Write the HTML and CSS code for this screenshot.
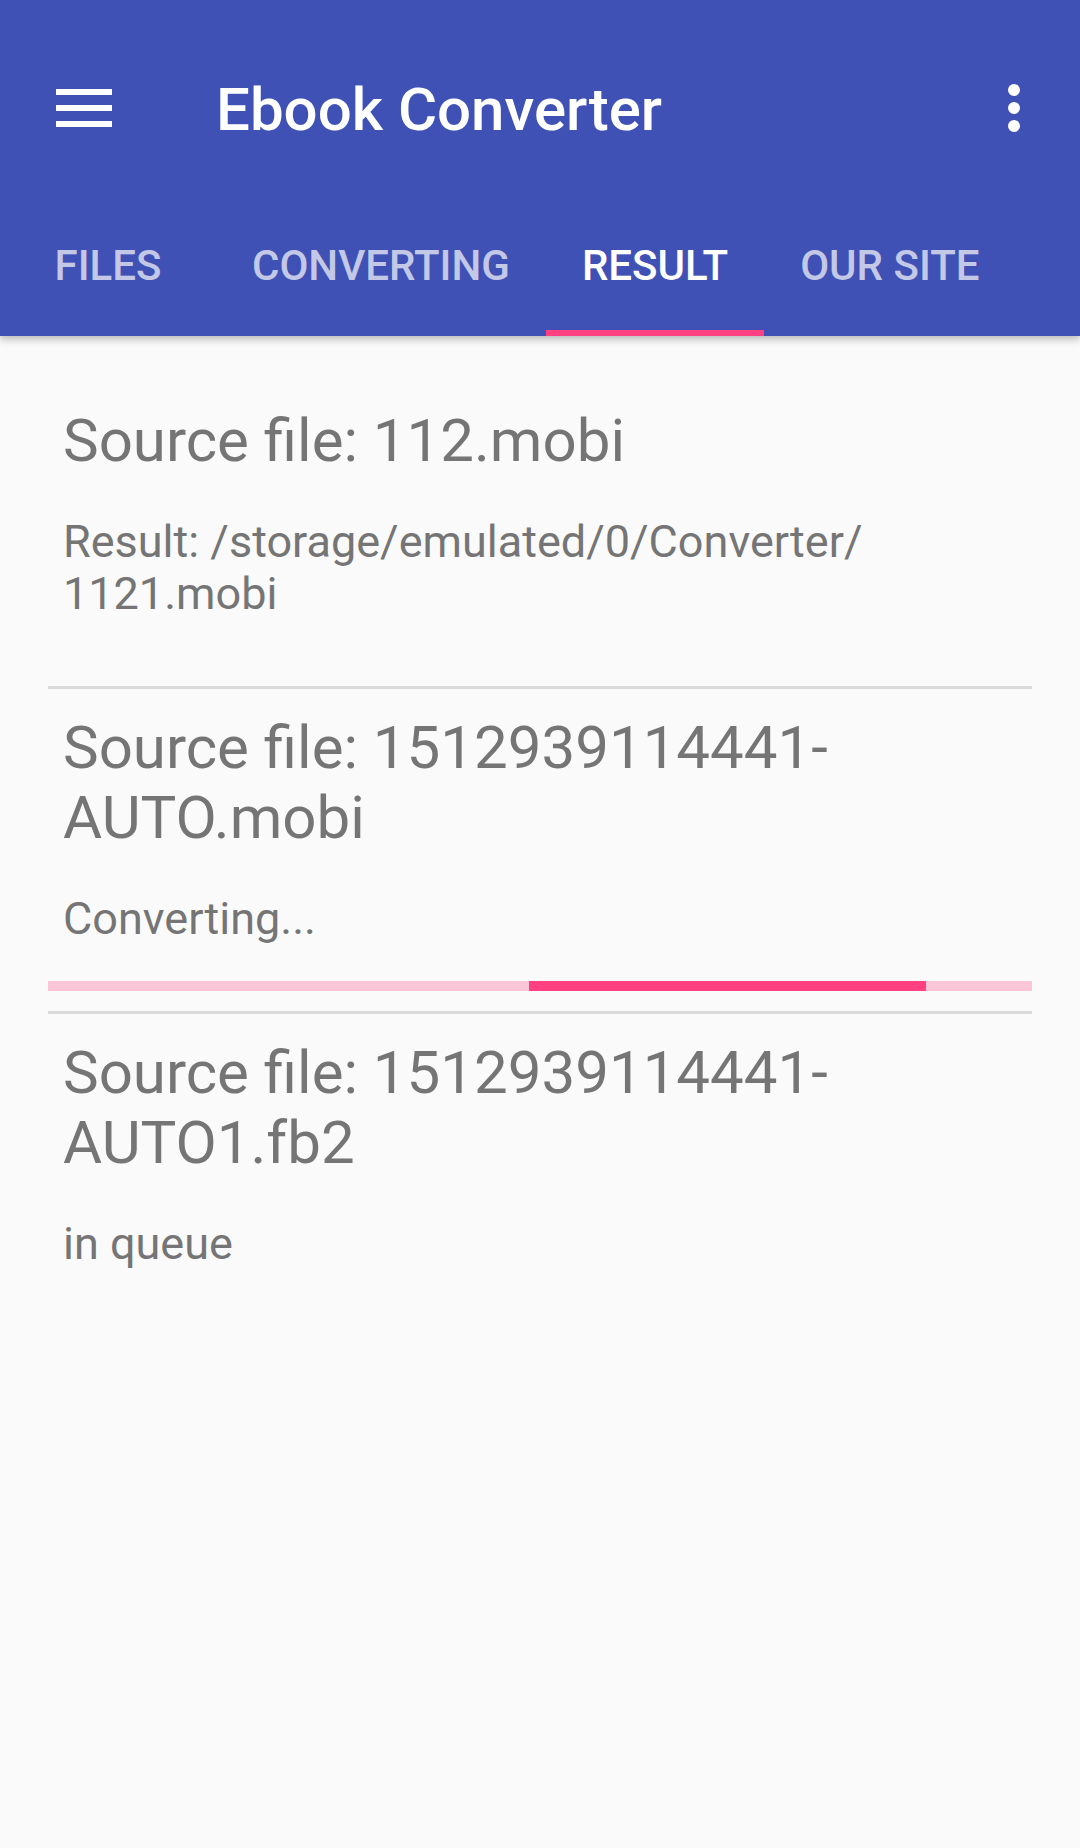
FILE: index.html
```html
<!DOCTYPE html>
<html lang="en">
<head>
<meta charset="utf-8">
<title>Ebook Converter</title>
<link rel="stylesheet" href="styles.css">
</head>
<body>
<header class="appbar">
  <div class="toolbar">
    <svg class="menu-icon" width="56" height="38" viewBox="0 0 56 38" aria-hidden="true">
      <rect x="0" y="0" width="56" height="6" fill="#fff"/>
      <rect x="0" y="16" width="56" height="6" fill="#fff"/>
      <rect x="0" y="32" width="56" height="6" fill="#fff"/>
    </svg>
    <h1 class="title">Ebook Converter</h1>
    <svg class="more-icon" width="12" height="48" viewBox="0 0 12 48" aria-hidden="true">
      <circle cx="6" cy="6" r="6" fill="#fff"/>
      <circle cx="6" cy="24" r="6" fill="#fff"/>
      <circle cx="6" cy="42" r="6" fill="#fff"/>
    </svg>
  </div>
  <nav class="tabs">
    <div class="tab">Files</div>
    <div class="tab">Converting</div>
    <div class="tab tab-active">Result</div>
    <div class="tab">Our site</div>
  </nav>
</header>
<main class="list">
  <section class="item">
    <div class="item-title">Source file: 112.mobi</div>
    <div class="item-sub">Result: /storage/emulated/0/Converter/<wbr>1121.mobi</div>
    <div class="progress progress-hidden"></div>
  </section>
  <section class="item">
    <div class="item-title">Source file: 1512939114441-<wbr>AUTO.mobi</div>
    <div class="item-sub">Converting...</div>
    <div class="progress"><div class="progress-bar" style="left:48.9%;width:40.3%"></div></div>
  </section>
  <section class="item item-last">
    <div class="item-title">Source file: 1512939114441-<wbr>AUTO1.fb2</div>
    <div class="item-sub">in queue</div>
  </section>
</main>
</body>
</html>
```
FILE: styles.css
```css
html, body {
  margin: 0;
  padding: 0;
}
body {
  width: 1080px;
  min-height: 1848px;
  background: #fafafa;
  font-family: Roboto, "Noto Sans", "Liberation Sans", sans-serif;
}
.appbar {
  background: #3f51b5;
  box-shadow: 0 3px 8px rgba(0, 0, 0, 0.28);
  position: relative;
  z-index: 1;
}
.toolbar {
  height: 168px;
  padding-top: 24px;
  display: flex;
  align-items: center;
}
.menu-icon {
  margin-left: 56px;
  flex: none;
}
.title {
  margin: 0 0 0 104px;
  padding-top: 3px;
  font-size: 60px;
  font-weight: 500;
  color: #fff;
  flex: 1;
  line-height: 70px;
}
.more-icon {
  margin-right: 60px;
  flex: none;
}
.tabs {
  display: flex;
  height: 144px;
}
.tab {
  min-width: 144px;
  padding: 3px 36px 0;
  display: flex;
  align-items: center;
  justify-content: center;
  font-size: 42px;
  font-weight: 500;
  text-transform: uppercase;
  color: rgba(255, 255, 255, 0.7);
  box-sizing: content-box;
  position: relative;
}
.tab-active {
  color: #fff;
}
.tab-active::after {
  content: "";
  position: absolute;
  left: 0;
  right: 0;
  bottom: 0;
  height: 6px;
  background: #ff4081;
}
.list {
  padding: 46px 48px 0;
}
.item {
  padding-top: 24px;
  border-bottom: 3px solid #dadada;
}
.item-last {
  border-bottom: none;
}
.item-title {
  padding: 0 15px;
  font-size: 60px;
  line-height: 70px;
  color: #757575;
}
.item-sub {
  margin-top: 40px;
  padding: 0 15px;
  font-size: 45px;
  line-height: 52px;
  color: #757575;
}
.progress {
  position: relative;
  margin: 36px 0 20px;
  height: 10px;
  background: #fcc5d8;
}
.progress-hidden {
  visibility: hidden;
}
.progress-bar {
  position: absolute;
  top: 0;
  bottom: 0;
  background: #ff4081;
}
```
